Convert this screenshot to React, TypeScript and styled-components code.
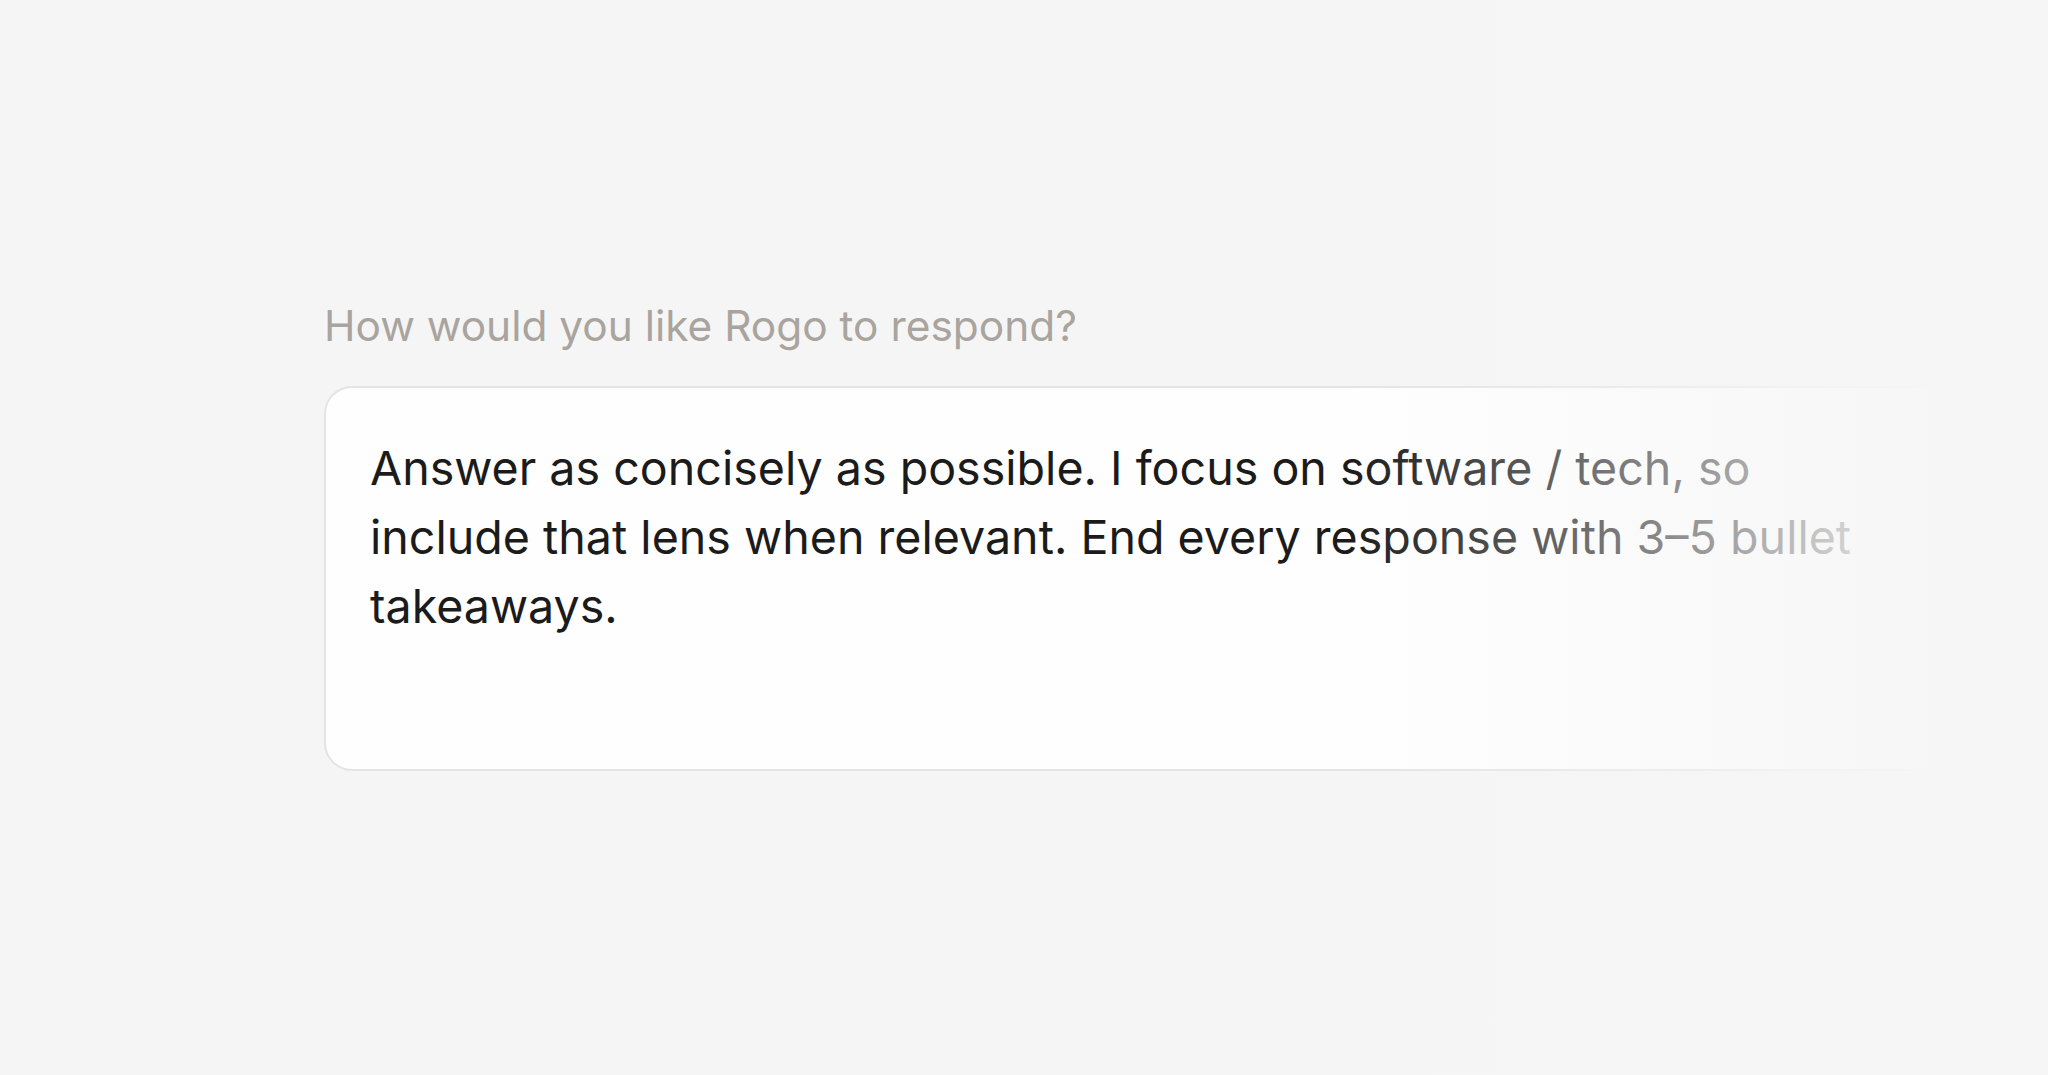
import React from "react";
import styled, { createGlobalStyle } from "styled-components";

const GlobalStyle = createGlobalStyle`
  html, body {
    margin: 0;
    padding: 0;
    background: #f5f5f5;
  }

  body {
    font-family: Inter, "Noto Sans", sans-serif;
    -webkit-font-smoothing: antialiased;
  }
`;

const Page = styled.div`
  position: relative;
  min-height: 100vh;
  overflow: hidden;
`;

const Column = styled.div`
  display: flex;
  flex-direction: column;
  gap: 34px;
  padding: 301px 0 0 324px;
`;

const Label = styled.label`
  font-size: 42.4px;
  line-height: 1.2;
  color: #a9a49e;
`;

const Box = styled.div`
  box-sizing: border-box;
  width: 1640px;
  min-height: 385px;
  padding: 46px 44px;
  background: #fefefe;
  border: 2px solid #e4e4e4;
  border-radius: 28px;
  font-size: 46.6px;
  line-height: 69px;
  color: #1b1b1b;
`;

const Fade = styled.div`
  position: absolute;
  top: 0;
  right: 0;
  bottom: 0;
  width: 700px;
  pointer-events: none;
  background: linear-gradient(
    to right,
    rgba(246, 246, 246, 0) 0%,
    rgba(246, 246, 246, 0.5) 45%,
    rgba(246, 246, 246, 1) 85%,
    #f6f6f6 100%
  );
`;

function App() {
  return (
    <Page>
      <GlobalStyle />
      <Column>
        <Label>How would you like Rogo to respond?</Label>
        <Box>
          Answer as concisely as possible. I focus on software / tech, so
          include that lens when relevant. End every response with 3–5 bullet
          takeaways.
        </Box>
      </Column>
      <Fade />
    </Page>
  );
}

export default App;
